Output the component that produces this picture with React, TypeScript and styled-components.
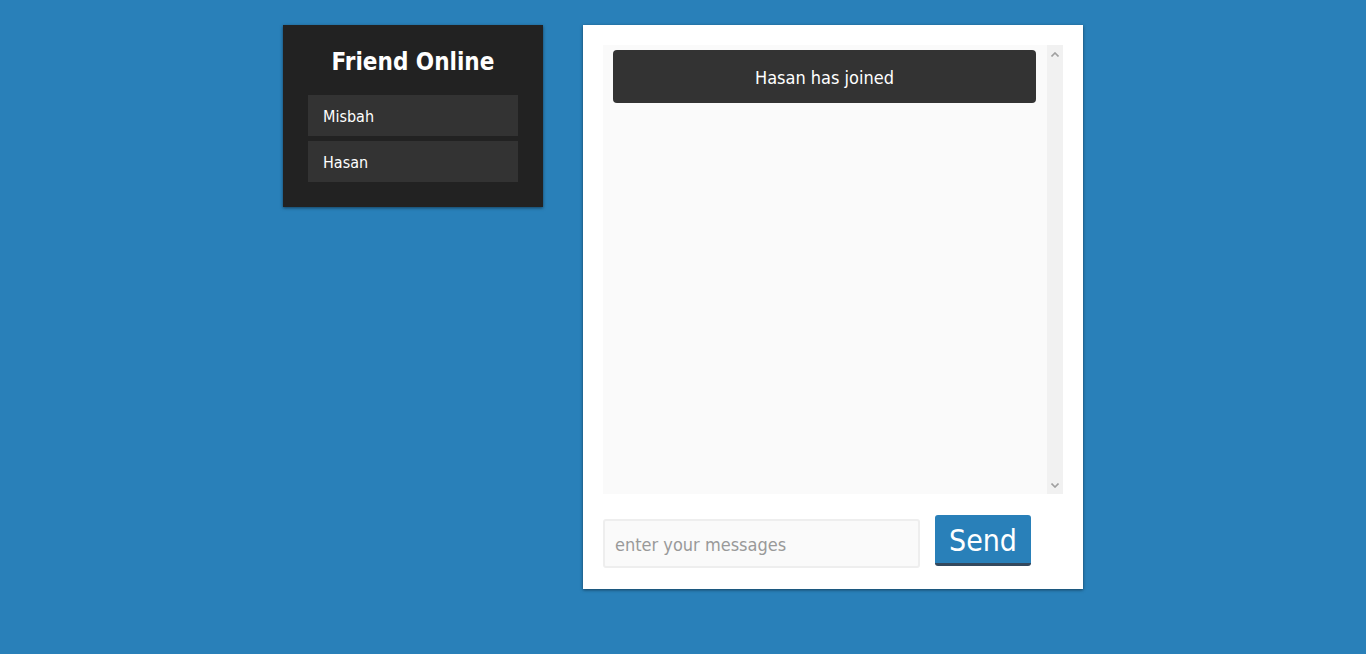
import styled, { createGlobalStyle } from "styled-components";

const friends = ["Misbah", "Hasan"];
const messages = ["Hasan has joined"];

function Chevron({ down }: { down?: boolean }) {
    return (
        <svg width="8" height="5" viewBox="0 0 8 5">
            <path
                d={down ? "M0.5 0.5 L4 4 L7.5 0.5" : "M0.5 4.5 L4 1 L7.5 4.5"}
                fill="none"
                stroke="#a0a0a0"
                strokeWidth="1.6"
            />
        </svg>
    );
}

function App() {
    return (
        <>
            <GlobalStyle />
            <Page>
                <FriendPanel>
                    <Title>Friend Online</Title>
                    <FriendList>
                        {friends.map((name) => (
                            <Friend key={name}>{name}</Friend>
                        ))}
                    </FriendList>
                </FriendPanel>
                <ChatPanel>
                    <MessageBox>
                        <MessageList>
                            {messages.map((text) => (
                                <Message key={text}>{text}</Message>
                            ))}
                        </MessageList>
                        <ScrollTrack>
                            <Chevron />
                            <Chevron down />
                        </ScrollTrack>
                    </MessageBox>
                    <SendForm onSubmit={(e) => e.preventDefault()}>
                        <MessageInput placeholder="enter your messages" />
                        <SendButton type="submit">Send</SendButton>
                    </SendForm>
                </ChatPanel>
            </Page>
        </>
    );
}

export default App;

const GlobalStyle = createGlobalStyle`
    html, body {
        margin: 0;
        height: 100%;
        background: #2980b9;
        font-family: "DejaVu Sans Condensed", "DejaVu Sans", sans-serif;
    }
`;

const Page = styled.div`
    display: flex;
    justify-content: center;
    align-items: flex-start;
    column-gap: 40px;
    padding-top: 25px;
`;

const FriendPanel = styled.div`
    width: 260px;
    box-sizing: border-box;
    padding: 25px;
    background-color: #222;
    box-shadow: 0 1px 3px rgba(0, 0, 0, 0.5);
`;

const Title = styled.div`
    margin: -2px 0 19px;
    color: white;
    font-size: 24px;
    font-weight: bold;
    text-align: center;
    line-height: 28px;
`;

const FriendList = styled.div`
    display: flex;
    flex-direction: column;
    row-gap: 5px;
`;

const Friend = styled.div`
    height: 41px;
    box-sizing: border-box;
    padding: 2px 15px 0;
    display: flex;
    align-items: center;
    background-color: #333;
    color: white;
    font-size: 16px;
`;

const ChatPanel = styled.div`
    width: 500px;
    height: 564px;
    box-sizing: border-box;
    padding: 20px;
    background-color: white;
    box-shadow: 0 1px 3px rgba(0, 0, 0, 0.5);
    display: flex;
    flex-direction: column;
`;

const MessageBox = styled.div`
    height: 449px;
    display: flex;
    background-color: #fafafa;
`;

const MessageList = styled.div`
    flex: 1;
    overflow: hidden;
    padding: 5px 11px 5px 10px;
`;

const ScrollTrack = styled.div`
    width: 16px;
    display: flex;
    flex-direction: column;
    align-items: center;
    justify-content: space-between;
    padding: 7px 0 6px;
    box-sizing: border-box;
    background-color: #f1f1f1;
`;

const Message = styled.div`
    height: 53px;
    box-sizing: border-box;
    padding-top: 2px;
    display: flex;
    align-items: center;
    justify-content: center;
    border-radius: 4px;
    background-color: #333;
    color: white;
    font-size: 18px;
`;

const SendForm = styled.form`
    display: flex;
    align-items: flex-start;
    column-gap: 15px;
    margin-top: 21px;
`;

const MessageInput = styled.input`
    width: 317px;
    height: 49px;
    box-sizing: border-box;
    margin-top: 4px;
    padding: 2px 10px 0;
    border: 2px solid #eee;
    border-radius: 3px;
    background-color: #fafafa;
    font-family: inherit;
    font-size: 18px;
    outline: none;

    &::placeholder {
        color: #999;
    }
`;

const SendButton = styled.button`
    width: 96px;
    height: 51px;
    box-sizing: border-box;
    padding: 2px 0 0;
    border: none;
    border-bottom: 3px solid #34495e;
    border-radius: 3px;
    background-color: #2980b9;
    color: white;
    font-family: inherit;
    font-size: 30px;
    cursor: pointer;
`;
